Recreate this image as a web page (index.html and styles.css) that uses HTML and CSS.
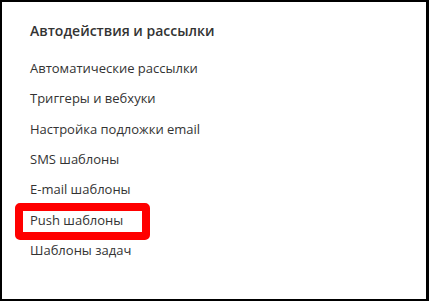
FILE: index.html
```html
<!DOCTYPE html>
<html lang="ru">
<head>
    <meta charset="UTF-8">
    <title>Автодействия и рассылки</title>
    <link rel="stylesheet" href="styles.css">
</head>
<body>
    <div class="panel">
        <h3 class="panel-title">Автодействия и рассылки</h3>
        <ul class="menu">
            <li class="menu-item">Автоматические рассылки</li>
            <li class="menu-item">Триггеры и вебхуки</li>
            <li class="menu-item">Настройка подложки email</li>
            <li class="menu-item">SMS шаблоны</li>
            <li class="menu-item">E-mail шаблоны</li>
            <li class="menu-item highlighted">Push шаблоны</li>
            <li class="menu-item">Шаблоны задач</li>
        </ul>
    </div>
</body>
</html>
```
FILE: styles.css
```css
html, body {
    margin: 0;
    padding: 0;
    background: #fff;
}

body {
    font-family: "Open Sans", "Noto Sans", sans-serif;
    color: #333;
}

.panel {
    box-sizing: border-box;
    width: 429px;
    height: 301px;
    border: 2px solid #000;
    border-right-width: 3px;
    padding: 19px 0 0 28px;
}

.panel-title {
    margin: 0 0 12px;
    font-size: 14px;
    font-weight: 600;
    line-height: 20px;
}

.menu {
    list-style: none;
    margin: 0;
    padding: 0;
}

.menu-item {
    font-size: 13px;
    line-height: 30.33px;
}

.highlighted {
    position: relative;
}

.highlighted::after {
    content: "";
    position: absolute;
    left: -15px;
    top: -2px;
    width: 119px;
    height: 21px;
    border: 8px solid #ff0000;
    border-radius: 5px;
}
```
